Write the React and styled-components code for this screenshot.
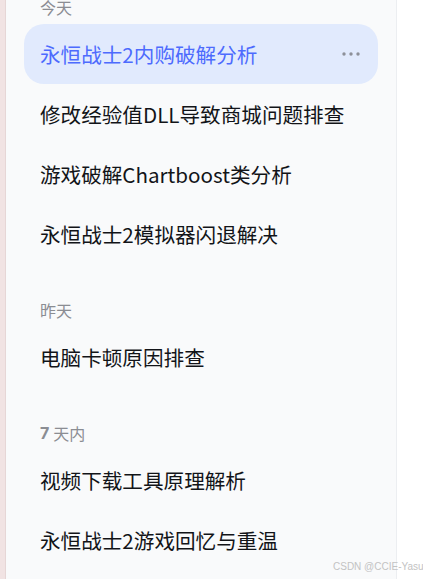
import styled, { createGlobalStyle } from 'styled-components';

const GlobalStyle = createGlobalStyle`
  html, body {
    margin: 0;
    padding: 0;
    background: #ffffff;
    overflow: hidden;
  }
  body {
    font-family: "Noto Sans CJK SC", "Noto Sans", sans-serif;
  }
`;

const Page = styled.div`
  display: flex;
  height: 579px;
  position: relative;
  overflow: hidden;
`;

const Edge = styled.div`
  width: 5px;
  flex: none;
  background: #f1e3e3;
  border-right: 1px solid #e6d6d6;
`;

const Sidebar = styled.nav`
  width: 390px;
  flex: none;
  background: #f9fafb;
  border-right: 1px solid #eceef1;
  overflow: hidden;
`;

const List = styled.div`
  display: flex;
  flex-direction: column;
  padding: 0 18px;
  margin-top: -39px;
`;

const GroupLabel = styled.div`
  display: flex;
  align-items: center;
  height: 20px;
  padding: 36px 16px 7px;
  font-size: 16px;
  color: #8b8d93;

  b {
    font-weight: 700;
    font-family: "Inter", "Noto Sans CJK SC", sans-serif;
    margin-right: 4px;
  }
`;

const Item = styled.div`
  display: flex;
  align-items: center;
  justify-content: space-between;
  height: 60px;
  padding: 0 16px;
  border-radius: 20px;
  font-size: 20.6px;
  color: ${({ $active }) => ($active ? '#4d6bfe' : '#121418')};
  background: ${({ $active }) => ($active ? '#e1eafd' : 'transparent')};
  white-space: nowrap;
`;

const More = styled.svg`
  flex: none;
  margin-right: 2px;
`;

const Watermark = styled.div`
  position: absolute;
  left: 333px;
  top: 561px;
  font-family: "Liberation Sans", sans-serif;
  font-size: 10px;
  color: #c3c3c3;
  white-space: nowrap;
`;

const groups = [
  {
    label: '今天',
    items: [
      '永恒战士2内购破解分析',
      '修改经验值DLL导致商城问题排查',
      '游戏破解Chartboost类分析',
      '永恒战士2模拟器闪退解决',
    ],
  },
  { label: '昨天', items: ['电脑卡顿原因排查'] },
  { label: '天内', num: '7', items: ['视频下载工具原理解析', '永恒战士2游戏回忆与重温'] },
];

export default function App() {
  return (
    <>
      <GlobalStyle />
      <Page>
        <Edge />
        <Sidebar>
          <List>
            {groups.map((g) => (
              <div key={g.label}>
                <GroupLabel>
                  {g.num && <b>{g.num}</b>}
                  {g.label}
                </GroupLabel>
                {g.items.map((t, i) => {
                  const active = g.label === '今天' && i === 0;
                  return (
                    <Item key={t} $active={active}>
                      <span>{t}</span>
                      {active && (
                        <More width="18" height="4" viewBox="0 0 18 4">
                          <circle cx="2" cy="2" r="1.7" fill="#8d9099" />
                          <circle cx="9" cy="2" r="1.7" fill="#8d9099" />
                          <circle cx="16" cy="2" r="1.7" fill="#8d9099" />
                        </More>
                      )}
                    </Item>
                  );
                })}
              </div>
            ))}
          </List>
        </Sidebar>
        <Watermark>CSDN @CCIE-Yasuo</Watermark>
      </Page>
    </>
  );
}
